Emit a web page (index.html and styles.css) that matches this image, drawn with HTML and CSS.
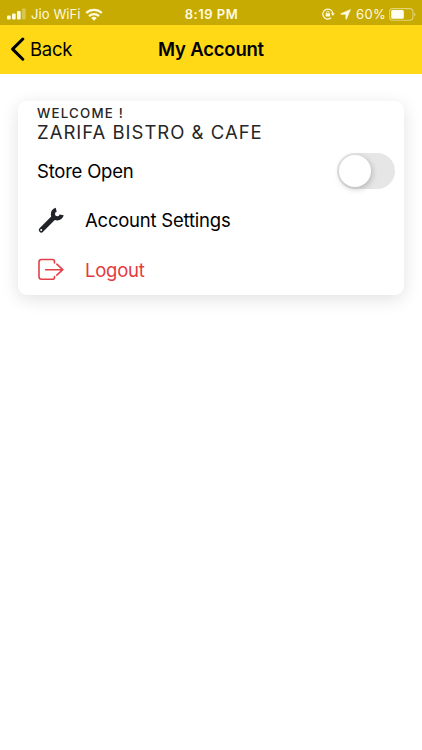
FILE: index.html
```html
<!DOCTYPE html>
<html lang="en">
<head>
    <meta charset="UTF-8">
    <meta name="viewport" content="width=device-width, initial-scale=1.0">
    <title>My Account</title>
    <link rel="stylesheet" href="styles.css">
</head>
<body>
    <!-- status bar -->
    <div class="status">
        <div class="status-left">
            <svg class="signal" width="19" height="12" viewBox="0 0 19 12" fill="#fffbe0">
                <rect x="0" y="7.5" width="3.7" height="4" rx="1"/>
                <rect x="5" y="5.5" width="3.7" height="6" rx="1"/>
                <rect x="10" y="3" width="3.7" height="8.5" rx="1"/>
                <rect x="15" y="0.5" width="3.7" height="11" rx="1" opacity="0.35"/>
            </svg>
            <span class="carrier">Jio WiFi</span>
            <svg class="wifi" width="18" height="13" viewBox="0 0 18 13" fill="none" stroke="#fffbe0" stroke-width="2.3">
                <path d="M1.2 5a11.2 11.2 0 0 1 15.6 0"/>
                <path d="M4 8.1a7.2 7.2 0 0 1 10 0"/>
                <path d="M9 12.8L6.2 10a4 4 0 0 1 5.6 0z" fill="#fffbe0" stroke="none"/>
            </svg>
        </div>
        <div class="time">8:19 PM</div>
        <div class="status-right">
            <svg class="lock" width="13" height="12" viewBox="0 0 13 12" fill="none" stroke="#fffbe0" stroke-width="1.2">
                <path d="M9.2 9.8A5 5 0 1 1 10.8 5.4"/>
                <path d="M9 5.3h3.8l-1.9 2.6z" fill="#fffbe0" stroke="none"/>
                <rect x="3.6" y="5.3" width="4.4" height="3.3" rx="0.5" fill="#fffbe0" stroke="none"/>
                <path d="M4.6 5.5V4.4a1.2 1.2 0 0 1 2.4 0v1.1" stroke-width="0.9"/>
            </svg>
            <svg class="location" width="11" height="11" viewBox="0 0 11 11" fill="#fffbe0" stroke="#fffbe0" stroke-width="0.6" stroke-linejoin="round">
                <path d="M10.5 0.5L6.4 10.2c-.1.3-.5.2-.5-.1V5.3H.9c-.3 0-.4-.4-.1-.5z"/>
            </svg>
            <span class="percent">60%</span>
            <svg class="battery" width="27" height="13" viewBox="0 0 27 13">
                <rect x="0.6" y="0.6" width="23.3" height="11.6" rx="3" fill="none" stroke="#fffbe0" stroke-opacity="0.5" stroke-width="1.1"/>
                <rect x="2.2" y="2.1" width="12.6" height="8.6" rx="1.5" fill="#fffef5"/>
                <path d="M25.1 4.4c1.8.7 1.8 3.4 0 4.1z" fill="#fffbe0" opacity="0.5"/>
            </svg>
        </div>
    </div>

    <header class="header">
        <div class="back">
            <svg width="15" height="24" viewBox="0 0 15 24" fill="none" stroke="#000" stroke-width="3" stroke-linecap="round" stroke-linejoin="round">
                <path d="M12.8 2L2.6 12.1l10.2 10.1"/>
            </svg>
            <span class="back-text">Back</span>
        </div>
        <h1 class="title">My Account</h1>
    </header>

    <main class="card">
        <div class="card-top">
            <p class="welcome">WELCOME !</p>
            <h2 class="name">ZARIFA BISTRO &amp; CAFE</h2>
        </div>
        <div class="item">
            <span class="store">Store Open</span>
            <span class="toggle"><span class="knob"></span></span>
        </div>
        <div class="item">
            <svg class="icon" width="27" height="27" viewBox="0 0 27 27" fill="none" stroke="#212328">
                <path d="M4.3 23L16.5 10.8" stroke-width="5" stroke-linecap="round"/>
                <path d="M19.2 2.8A4.4 4.4 0 1 0 24.6 7.8" stroke-width="4.2" stroke-linecap="butt"/>
                <circle cx="4.2" cy="23" r="1" fill="#fff" stroke="none"/>
            </svg>
            <span class="settings">Account Settings</span>
        </div>
        <div class="item logout">
            <svg class="icon" width="27" height="27" viewBox="0 0 27 27" fill="none" stroke="#e14249" stroke-width="1.6" stroke-linecap="round" stroke-linejoin="round">
                <path d="M17.5 7V5.5a2 2 0 0 0-2-2H4.5a2.5 2.5 0 0 0-2.5 2.5v14.8a2.5 2.5 0 0 0 2.5 2.5H15.5a2 2 0 0 0 2-2V20.5"/>
                <path d="M8.7 13.7h17M19.8 8.2l6 5.5-6 5.5"/>
            </svg>
            <span class="logout-text">Logout</span>
        </div>
    </main>
</body>
</html>
```

FILE: styles.css
```css
*{
    margin: 0;
    padding: 0;
    box-sizing: border-box;
}
body{
    min-height: 750px;
    background-color: #fff;
    font-family: Inter, "Liberation Sans", sans-serif;
    color: #000;
}
svg{
    display: block;
    flex: none;
}
span, h1, h2, p{
    white-space: nowrap;
}

/* status bar */
.status{
    display: grid;
    grid-template-columns: 1fr auto 1fr;
    align-items: center;
    height: 25px;
    padding: 3px 6px 0 7px;
    background-color: #c7aa02;
    color: #fffbe0;
    font-size: 13px;
}
.status-left, .status-right{
    display: flex;
    align-items: center;
}
.status-right{
    justify-content: flex-end;
}
.carrier{
    margin-left: 5px;
    letter-spacing: 0.1px;
}
.wifi{
    margin-left: 4px;
}
.time{
    font-weight: 600;
    letter-spacing: 0.5px;
}
.location{
    margin-left: 5px;
}
.percent{
    margin-left: 5px;
    letter-spacing: 0.3px;
}
.battery{
    margin-left: 3px;
}

/* title bar */
.header{
    display: grid;
    grid-template-columns: 1fr auto 1fr;
    align-items: center;
    height: 49px;
    padding: 0 10px 1px;
    background-color: #ffd916;
}
.back{
    display: flex;
    align-items: center;
}
.back-text{
    margin-left: 5px;
    font-size: 18.5px;
    letter-spacing: -0.25px;
}
.title{
    font-size: 18.5px;
    font-weight: 600;
    letter-spacing: -0.2px;
}

/* card */
.card{
    width: 386px;
    height: 194px;
    margin: 27px 18px 0;
    padding: 0 9px 0 19px;
    border-radius: 9px;
    background-color: #fff;
    box-shadow: 0 4px 18px rgba(0, 0, 0, 0.12);
}
.card-top{
    height: 45px;
    padding-top: 4px;
}
.welcome{
    font-size: 13.3px;
    font-weight: 500;
    line-height: 16px;
    letter-spacing: 1.2px;
    color: #262626;
}
.name{
    font-size: 18.5px;
    font-weight: 400;
    line-height: 23px;
    letter-spacing: 1px;
    color: #262626;
}
.item{
    display: flex;
    align-items: center;
    height: 49.5px;
    font-size: 18.5px;
    letter-spacing: -0.22px;
}
.icon{
    margin-right: 21px;
}
.toggle{
    width: 58px;
    height: 36px;
    margin-left: auto;
    padding: 2px;
    border-radius: 18px;
    background-color: #e6e6e6;
}
.knob{
    display: block;
    width: 32px;
    height: 32px;
    border-radius: 50%;
    background-color: #fff;
    box-shadow: 1px 2px 6px rgba(0, 0, 0, 0.22);
}
.logout{
    color: #e43a40;
}
```
